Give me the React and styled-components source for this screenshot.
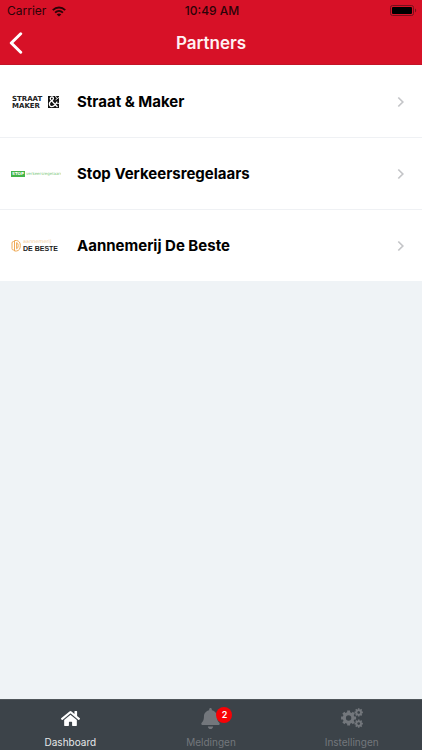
import React from "react";
import styled, { createGlobalStyle } from "styled-components";
import { FaHome, FaBell } from "react-icons/fa";

const GlobalStyle = createGlobalStyle`
  *, *::before, *::after { box-sizing: border-box; }
  body {
    margin: 0;
    background: #eff3f6;
    font-family: Inter, "Liberation Sans", sans-serif;
    color: #000;
  }
`;

const Screen = styled.div`
  display: flex;
  flex-direction: column;
  min-height: 100vh;
`;

const Header = styled.header`
  background: #d71127;
  border-bottom: 1px solid #c41427;
`;

const StatusBar = styled.div`
  display: grid;
  grid-template-columns: 1fr auto 1fr;
  align-items: center;
  height: 22px;
  padding: 0 5px 0 7px;
  font-size: 12px;
  line-height: 22px;
  color: #2b0307;
`;

const Carrier = styled.span`
  display: flex;
  align-items: center;
  gap: 6px;
`;

const Clock = styled.time`
  font-weight: 500;
`;

const BatterySlot = styled.span`
  display: flex;
  justify-content: flex-end;
`;

const TitleBar = styled.div`
  display: grid;
  grid-template-columns: 40px 1fr 40px;
  align-items: center;
  height: 42px;
`;

const BackButton = styled.button`
  display: flex;
  align-items: center;
  height: 42px;
  padding: 0 0 0 9px;
  border: 0;
  background: none;
  color: #fff;
  cursor: pointer;
`;

const Title = styled.h1`
  margin: 0;
  text-align: center;
  font-size: 17px;
  line-height: 24px;
  font-weight: 600;
  color: #fff1f3;
`;

const Main = styled.main`
  flex: 1;
`;

const PartnerList = styled.ul`
  margin: 0;
  padding: 0;
  list-style: none;
  background: #fff;
`;

const PartnerItem = styled.li`
  border-top: 1px solid #eff1f4;

  &:first-child {
    border-top-color: #fff;
  }
`;

const PartnerLink = styled.a`
  display: flex;
  align-items: center;
  gap: 16px;
  height: 71px;
  padding: 0 17px 0 11px;
  color: #000;
  text-decoration: none;
`;

const LogoBox = styled.span`
  display: flex;
  flex: none;
  width: 50px;
`;

const PartnerName = styled.span`
  flex: 1;
  font-size: 15px;
  line-height: 24px;
  font-weight: 700;
`;

const TabBar = styled.nav`
  display: grid;
  grid-template-columns: repeat(3, 1fr);
  height: 51px;
  background: #3c4349;
  border-top: 1px solid #50565b;
`;

const Tab = styled.a`
  display: flex;
  flex-direction: column;
  align-items: center;
  justify-content: space-between;
  padding: 6px 0 1px;
  font-size: 10px;
  line-height: 14px;
  text-decoration: none;
  color: ${({ $active }) => ($active ? "#fff" : "#73777c")};
`;

const TabIcon = styled.span`
  position: relative;
  display: flex;
  align-items: center;
  justify-content: center;
  height: 24px;
`;

const TabLabel = styled.span`
  color: ${({ $active }) => ($active ? "#e6e8e9" : "#73777c")};
`;

const Badge = styled.span`
  position: absolute;
  top: 1px;
  right: -11px;
  width: 16px;
  height: 16px;
  border-radius: 50%;
  background: #f80206;
  color: #fff;
  font-size: 9px;
  line-height: 16px;
  font-weight: 600;
  text-align: center;
`;

function WifiIcon() {
  return (
    <svg width="14" height="11" viewBox="0 0 14 11" fill="none" stroke="currentColor" strokeWidth="1.9" aria-hidden="true">
      <path d="M0.8 4.2C4.4 0.5 9.6 0.5 13.2 4.2" />
      <path d="M3.1 6.6C5.4 4.4 8.6 4.4 10.9 6.6" />
      <path d="M7 10.6L4.7 8.4C6 7.2 8 7.2 9.3 8.4Z" fill="currentColor" stroke="none" />
    </svg>
  );
}

function BatteryIcon() {
  return (
    <svg width="27" height="12" viewBox="0 0 27 12" role="img" aria-label="Battery full">
      <rect x="0.5" y="0.5" width="23" height="10" rx="2" fill="none" stroke="#75101c" />
      <rect x="2" y="2" width="20" height="7" rx="1" fill="#000" />
      <path d="M25 3.6C26.6 4.2 26.6 6.8 25 7.4Z" fill="#75101c" />
    </svg>
  );
}

function BackIcon() {
  return (
    <svg width="14" height="22" viewBox="0 0 14 22" fill="none" stroke="currentColor" strokeWidth="3" strokeLinecap="round" strokeLinejoin="round" aria-hidden="true">
      <path d="M11.7 1.8L2.3 11L11.7 20.2" />
    </svg>
  );
}

function ChevronIcon() {
  return (
    <svg width="8" height="12" viewBox="0 0 8 12" fill="none" stroke="#c4c5c8" strokeWidth="1.7" aria-hidden="true">
      <path d="M1.3 1.5L5.8 6L1.3 10.5" />
    </svg>
  );
}

function Gear({ cx, cy, body, reach, tooth, ring }) {
  return (
    <g transform={`translate(${cx} ${cy})`}>
      {[0, 45, 90, 135].map((angle) => (
        <path
          key={angle}
          d={`M0 ${-reach}V${-body}M0 ${body}V${reach}`}
          transform={`rotate(${angle})`}
          strokeWidth={tooth}
        />
      ))}
      <circle r={body} strokeWidth={ring} />
    </g>
  );
}

function CogsIcon() {
  return (
    <svg width="22" height="20" viewBox="0 0 22 20" fill="none" stroke="currentColor" aria-hidden="true">
      <Gear cx={7.6} cy={10} body={4.3} reach={7.5} tooth={2.9} ring={3.2} />
      <Gear cx={17.7} cy={4.4} body={2.3} reach={4.2} tooth={1.6} ring={1.8} />
      <Gear cx={17.7} cy={15.6} body={2.3} reach={4.2} tooth={1.6} ring={1.8} />
    </svg>
  );
}

function StraatMakerLogo() {
  return (
    <svg width="50" height="16" viewBox="0 0 50 16" aria-hidden="true">
      <g fontFamily="DejaVu Sans, sans-serif" fontWeight="700" fontSize="7" fill="#222">
        <text x="1" y="7">STRAAT</text>
        <text x="1" y="14">MAKER</text>
      </g>
      <rect x="37" y="2" width="11" height="12" fill="#111" />
      <path d="M46.5 13L39.6 5.6C38.6 3.9 40 2.8 41.3 3C43 3.3 42.7 5.2 41.2 6.4C39 7.8 37.8 9.6 38.7 11.3C40.4 13.9 44.5 12.3 46 7.6" fill="none" stroke="#fff" strokeWidth="1.3" />
      <path d="M44.4 2L46 4.6L48 3.4M46 4.6L44.6 6.2M45 9.2L48 9.4" fill="none" stroke="#fff" strokeWidth="0.9" />
    </svg>
  );
}

function StopLogo() {
  return (
    <svg width="50" height="10" viewBox="0 0 50 10" aria-hidden="true">
      <rect x="0" y="2" width="14" height="6" fill="#43b649" />
      <g fontFamily="DejaVu Sans, sans-serif" fontSize="4">
        <text x="1" y="6" fontWeight="700" fill="#fff">STOP</text>
        <text x="15" y="6" fill="#7cc97c">verkeersregelaars</text>
      </g>
    </svg>
  );
}

function DeBesteLogo() {
  return (
    <svg width="50" height="14" viewBox="0 0 50 14" aria-hidden="true">
      <g fill="none" stroke="#efaa56" strokeWidth="1">
        <path d="M4 2.5H2.5Q1 2.5 1 4V9.5Q1 11 2.5 11H4" />
        <path d="M3.5 1.5H5.5Q9.3 2 9.3 6.6Q9.3 11.5 5.5 12H3.5Z" />
        <path d="M5.6 3.5V9.8Q7.2 9.4 7.2 6.6Q7.2 3.9 5.6 3.5Z" />
      </g>
      <text x="12" y="4" fontFamily="DejaVu Sans, sans-serif" fontSize="5" fill="#f3cb98">aannemerij</text>
      <text x="12" y="12" fontFamily="Liberation Sans, sans-serif" fontWeight="700" fontSize="7" fill="#1c1c1c">DE BESTE</text>
    </svg>
  );
}

const partners = [
  { name: "Straat & Maker", Logo: StraatMakerLogo },
  { name: "Stop Verkeersregelaars", Logo: StopLogo },
  { name: "Aannemerij De Beste", Logo: DeBesteLogo },
];

const tabs = [
  { label: "Dashboard", icon: <FaHome size={19} aria-hidden="true" />, active: true },
  { label: "Meldingen", icon: <FaBell size={21} aria-hidden="true" />, badge: 2 },
  { label: "Instellingen", icon: <CogsIcon /> },
];

export default function App() {
  return (
    <Screen>
      <GlobalStyle />
      <Header>
        <StatusBar>
          <Carrier>
            Carrier
            <WifiIcon />
          </Carrier>
          <Clock>10:49 AM</Clock>
          <BatterySlot>
            <BatteryIcon />
          </BatterySlot>
        </StatusBar>
        <TitleBar>
          <BackButton type="button" aria-label="Back">
            <BackIcon />
          </BackButton>
          <Title>Partners</Title>
        </TitleBar>
      </Header>
      <Main>
        <PartnerList>
          {partners.map(({ name, Logo }) => (
            <PartnerItem key={name}>
              <PartnerLink href="#">
                <LogoBox>
                  <Logo />
                </LogoBox>
                <PartnerName>{name}</PartnerName>
                <ChevronIcon />
              </PartnerLink>
            </PartnerItem>
          ))}
        </PartnerList>
      </Main>
      <TabBar>
        {tabs.map(({ label, icon, active, badge }) => (
          <Tab key={label} href="#" $active={active} aria-current={active ? "page" : undefined}>
            <TabIcon>
              {icon}
              {badge && <Badge>{badge}</Badge>}
            </TabIcon>
            <TabLabel $active={active}>{label}</TabLabel>
          </Tab>
        ))}
      </TabBar>
    </Screen>
  );
}
